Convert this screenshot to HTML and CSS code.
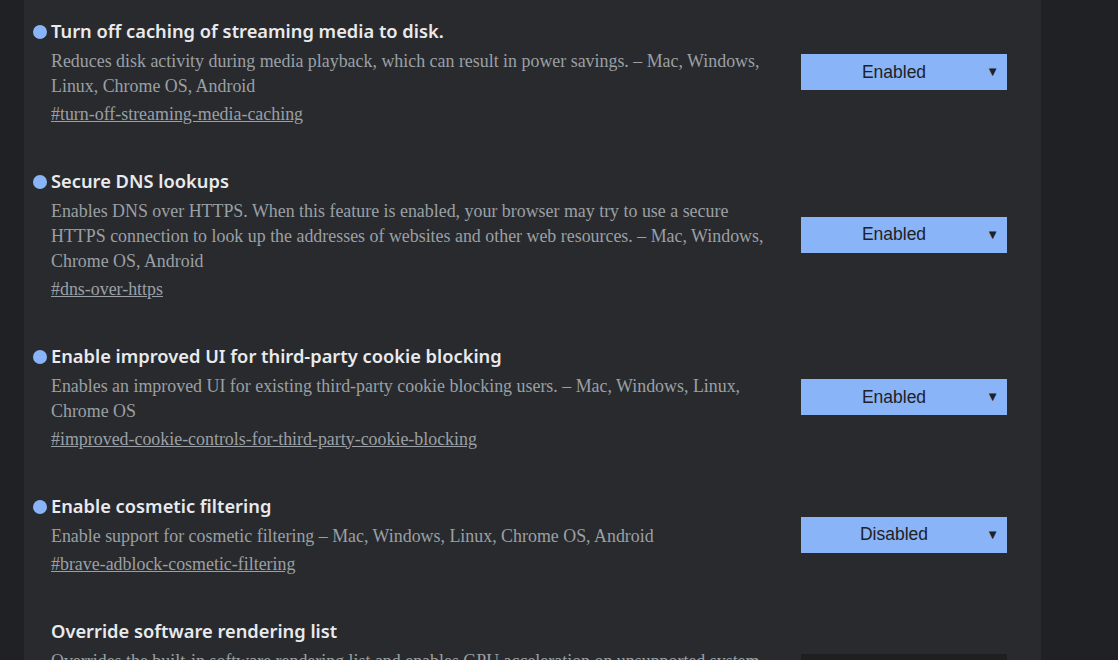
FILE: index.html
```html
<!DOCTYPE html>
<html>
<head>
<meta charset="utf-8">
<link rel="stylesheet" href="styles.css">
</head>
<body>
<div class="panel">
  <div class="experiment">
    <div class="info">
      <h3 class="title modified">Turn off caching of streaming media to disk.</h3>
      <p class="desc">Reduces disk activity during media playback, which can result in power savings. – Mac, Windows, Linux, Chrome OS, Android</p>
      <a class="perma" href="#">#turn-off-streaming-media-caching</a>
    </div>
    <div class="select"><span class="value">Enabled</span><span class="arrow">▼</span></div>
  </div>
  <div class="experiment">
    <div class="info">
      <h3 class="title modified">Secure DNS lookups</h3>
      <p class="desc">Enables DNS over HTTPS. When this feature is enabled, your browser may try to use a secure HTTPS connection to look up the addresses of websites and other web resources. – Mac, Windows, Chrome OS, Android</p>
      <a class="perma" href="#">#dns-over-https</a>
    </div>
    <div class="select"><span class="value">Enabled</span><span class="arrow">▼</span></div>
  </div>
  <div class="experiment">
    <div class="info">
      <h3 class="title modified">Enable improved UI for third-party cookie blocking</h3>
      <p class="desc">Enables an improved UI for existing third-party cookie blocking users. – Mac, Windows, Linux, Chrome OS</p>
      <a class="perma" href="#">#improved-cookie-controls-for-third-party-cookie-blocking</a>
    </div>
    <div class="select"><span class="value">Enabled</span><span class="arrow">▼</span></div>
  </div>
  <div class="experiment">
    <div class="info">
      <h3 class="title modified">Enable cosmetic filtering</h3>
      <p class="desc">Enable support for cosmetic filtering – Mac, Windows, Linux, Chrome OS, Android</p>
      <a class="perma" href="#">#brave-adblock-cosmetic-filtering</a>
    </div>
    <div class="select"><span class="value">Disabled</span><span class="arrow">▼</span></div>
  </div>
  <div class="experiment">
    <div class="info">
      <h3 class="title">Override software rendering list</h3>
      <p class="desc">Overrides the built-in software rendering list and enables GPU acceleration on unsupported system configurations. – Mac, Windows, Linux, Chrome OS, Android</p>
      <a class="perma" href="#">#ignore-gpu-blocklist</a>
    </div>
    <div class="select default"><span class="value">Default</span><span class="arrow">▼</span></div>
  </div>
</div>
</body>
</html>
```
FILE: styles.css
```css
html, body {
  margin: 0;
  padding: 0;
  background: #202124;
  height: 100%;
  overflow: hidden;
}
.panel {
  margin-left: 24px;
  width: 1017px;
  min-height: 100%;
  box-sizing: border-box;
  background: #292a2d;
  padding: 0 34px 0 27px;
}
.experiment {
  display: flex;
  align-items: center;
  padding: 17px 0 23.5px;
}
.info {
  flex: 1;
  margin-right: 30px;
  min-width: 0;
}
.title {
  position: relative;
  margin: 0 0 3.5px;
  font-family: "Noto Sans", sans-serif;
  font-weight: 600;
  font-size: 18.3px;
  line-height: 28px;
  color: #e8eaed;
}
.title.modified::before {
  content: "";
  position: absolute;
  left: -18.5px;
  top: 7.5px;
  width: 14px;
  height: 14px;
  border-radius: 50%;
  background: #8ab4f8;
}
.desc {
  margin: 0;
  font-family: "Liberation Serif", serif;
  font-size: 17.9px;
  line-height: 25px;
  color: #9aa0a6;
}
.perma {
  display: block;
  margin-top: 3px;
  font-family: "Liberation Serif", serif;
  font-size: 17.9px;
  line-height: 25px;
  color: #9aa0a6;
  text-decoration: underline;
}
.select {
  position: relative;
  flex: none;
  width: 206px;
  height: 36px;
  margin-top: 1px;
  box-sizing: border-box;
  padding: 0 26px 0 6px;
  display: flex;
  align-items: center;
  justify-content: center;
  background: #8ab4f8;
  color: #202124;
  font-family: "Liberation Sans", sans-serif;
  font-size: 17.5px;
}
.select.default {
  background: #1e1f21;
  color: #e8eaed;
}
.arrow {
  position: absolute;
  right: 8px;
  top: 10px;
  font-size: 13px;
  line-height: 16px;
}
```
